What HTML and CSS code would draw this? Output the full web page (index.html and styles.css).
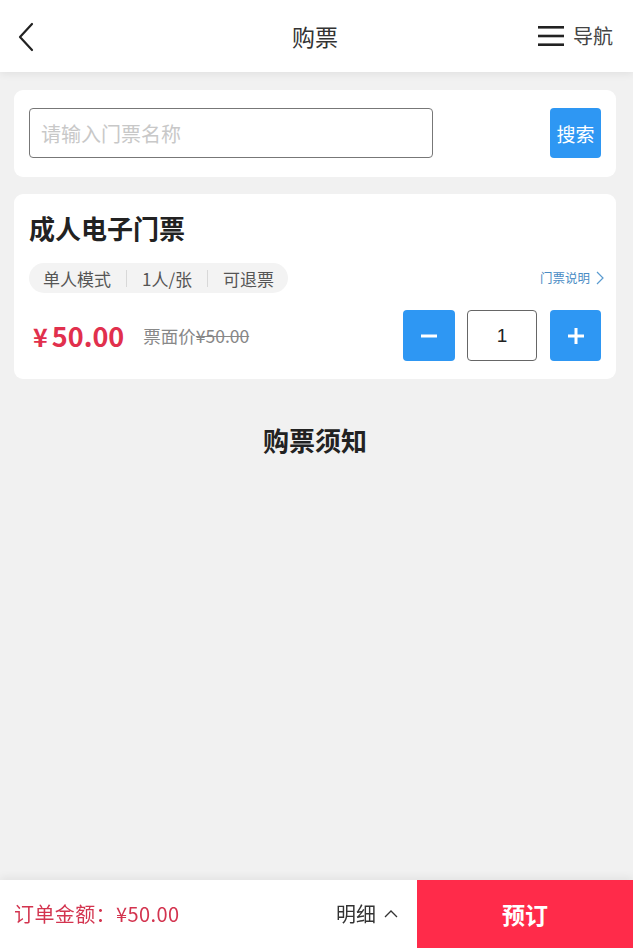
FILE: index.html
```html
<!DOCTYPE html>
<html lang="zh-CN">
<head>
<meta charset="utf-8">
<title>购票</title>
<link rel="stylesheet" href="styles.css">
</head>
<body>
<header class="topbar">
  <a class="back" aria-label="返回">
    <svg width="20" height="30" viewBox="0 0 20 30"><path d="M15 2 L3 15 L15 28" fill="none" stroke="#222" stroke-width="2.2" stroke-linecap="round" stroke-linejoin="round"/></svg>
  </a>
  <h1 class="title">购票</h1>
  <div class="nav">
    <svg class="menu" width="26" height="22" viewBox="0 0 26 22"><rect x="0" y="1" width="26" height="2.6" fill="#222"/><rect x="0" y="9.7" width="26" height="2.6" fill="#222"/><rect x="0" y="18.4" width="26" height="2.6" fill="#222"/></svg>
    <span>导航</span>
  </div>
</header>

<main class="content">
  <section class="card search-card">
    <input class="search-input" type="text" placeholder="请输入门票名称">
    <button class="search-btn">搜索</button>
  </section>

  <section class="card ticket-card">
    <h2 class="ticket-name">成人电子门票</h2>
    <div class="tag-row">
      <div class="tags">
        <span class="tag">单人模式</span>
        <span class="sep"></span>
        <span class="tag">1人/张</span>
        <span class="sep"></span>
        <span class="tag">可退票</span>
      </div>
      <a class="explain">门票说明
        <svg width="8" height="14" viewBox="0 0 8 14"><path d="M1 1 L7 7 L1 13" fill="none" stroke="#5a9bd0" stroke-width="1.2"/></svg>
      </a>
    </div>
    <div class="price-row">
      <div class="prices">
        <span class="price"><span class="yen">¥</span>50.00</span>
        <span class="face">票面价<s>¥50.00</s></span>
      </div>
      <div class="stepper">
        <button class="step-btn" aria-label="减少">
          <svg width="16" height="16" viewBox="0 0 16 16"><rect x="0" y="6.5" width="16" height="3" fill="#fff"/></svg>
        </button>
        <div class="qty">1</div>
        <button class="step-btn" aria-label="增加">
          <svg width="16" height="16" viewBox="0 0 16 16"><rect x="0" y="6.5" width="16" height="3" fill="#fff"/><rect x="6.5" y="0" width="3" height="16" fill="#fff"/></svg>
        </button>
      </div>
    </div>
  </section>

  <h2 class="notice">购票须知</h2>
</main>

<footer class="bottombar">
  <div class="total">订单金额：¥50.00</div>
  <div class="detail">明细
    <svg width="14" height="10" viewBox="0 0 14 10"><path d="M1 8 L7 2 L13 8" fill="none" stroke="#333" stroke-width="1.3"/></svg>
  </div>
  <button class="book">预订</button>
</footer>
</body>
</html>
```

FILE: styles.css
```css
* { box-sizing: border-box; }
html, body { margin: 0; padding: 0; }
body {
  background: #f1f1f1;
  font-family: "Noto Sans CJK SC", "Noto Sans", "Liberation Sans", sans-serif;
  color: #333;
  width: 633px;
  height: 948px;
  overflow: hidden;
}
.topbar {
  height: 72px;
  background: #fff;
  display: grid;
  grid-template-columns: 1fr auto 1fr;
  align-items: center;
  padding: 0 20px 0 17px;
  box-shadow: 0 2px 8px rgba(0,0,0,0.07);
  position: relative;
  z-index: 1;
}
.back { display: flex; align-items: center; margin-top: 1px; }
.title {
  margin: 1px 0 0;
  font-size: 23px;
  font-weight: 400;
  color: #333;
  line-height: 1;
}
.nav {
  justify-self: end;
  display: flex;
  align-items: center;
  gap: 9px;
  font-size: 20px;
  color: #444;
  line-height: 1;
}
.menu { display: block; }

.content { padding: 18px 17px 0 14px; }
.card {
  background: #fff;
  border-radius: 9px;
}
.search-card {
  display: flex;
  justify-content: space-between;
  align-items: center;
  padding: 18px 15px 19px 15px;
}
.search-input {
  width: 404px;
  height: 50px;
  border: 1px solid #777;
  border-radius: 4px;
  padding: 0 11px;
  font-family: inherit;
  font-size: 20px;
  outline: none;
}
.search-input::placeholder { color: #c8c8c8; }
.search-btn {
  width: 51px;
  height: 50px;
  border: none;
  border-radius: 4px;
  background: #2e97f3;
  color: #fff;
  font-family: inherit;
  font-size: 19px;
  padding: 0;
}
.ticket-card {
  margin-top: 17px;
  padding: 17px 15px 18px 15px;
}
.ticket-name {
  margin: 0;
  font-size: 26px;
  font-weight: 700;
  color: #222;
  line-height: 34px;
}
.tag-row {
  margin-top: 18px;
  display: flex;
  justify-content: space-between;
  align-items: center;
}
.tags {
  display: flex;
  align-items: center;
  height: 30px;
  background: #f3f3f3;
  border-radius: 15px;
  padding: 0 14px;
  font-size: 17px;
  color: #555;
  line-height: 1;
}
.sep { width: 1px; height: 17px; background: #d8d8d8; margin: 0 15px; }
.explain {
  display: flex;
  align-items: center;
  gap: 6px;
  font-size: 12.5px;
  color: #4a8cc4;
  margin-right: -3px;
  line-height: 1;
}
.price-row {
  margin-top: 17px;
  display: flex;
  justify-content: space-between;
  align-items: center;
}
.prices { display: flex; align-items: center; padding-left: 4px; }
.price {
  font-size: 27px;
  font-weight: 700;
  color: #e1304d;
  line-height: 1;
}
.yen { margin-right: 4px; font-size: 25px; }
.face {
  margin-left: 19px;
  font-size: 17.5px;
  color: #888;
  line-height: 1;
}
.face s { text-decoration-thickness: 1px; }
.stepper { display: flex; align-items: center; gap: 12px; }
.step-btn {
  width: 52px;
  height: 51px;
  border: none;
  border-radius: 4px;
  background: #2e97f3;
  display: flex;
  align-items: center;
  justify-content: center;
  padding: 0;
}
.stepper .step-btn:last-child { width: 51px; margin-left: 1px; }
.qty {
  width: 70px;
  height: 51px;
  border: 1px solid #666;
  border-radius: 4px;
  display: flex;
  align-items: center;
  justify-content: center;
  font-size: 19px;
  color: #222;
  font-family: "Liberation Sans", sans-serif;
}
.notice {
  margin: 44px 0 0;
  text-align: center;
  font-size: 26px;
  font-weight: 700;
  color: #222;
  line-height: 34px;
}
.bottombar {
  position: fixed;
  left: 0;
  right: 0;
  bottom: 0;
  height: 68px;
  background: #fff;
  display: flex;
  align-items: center;
  box-shadow: 0 -3px 8px rgba(0,0,0,0.06);
}
.total {
  flex: 1;
  padding-left: 14px;
  font-size: 20px;
  color: #d3344f;
  line-height: 1;
  letter-spacing: 0.4px;
}
.detail {
  display: flex;
  align-items: center;
  gap: 8px;
  font-size: 20px;
  color: #333;
  margin-right: 19px;
  line-height: 1;
}
.book {
  width: 216px;
  height: 68px;
  border: none;
  background: #ff2b4a;
  color: #fff;
  font-family: inherit;
  font-size: 23px;
  font-weight: 700;
  padding: 0;
}
```
